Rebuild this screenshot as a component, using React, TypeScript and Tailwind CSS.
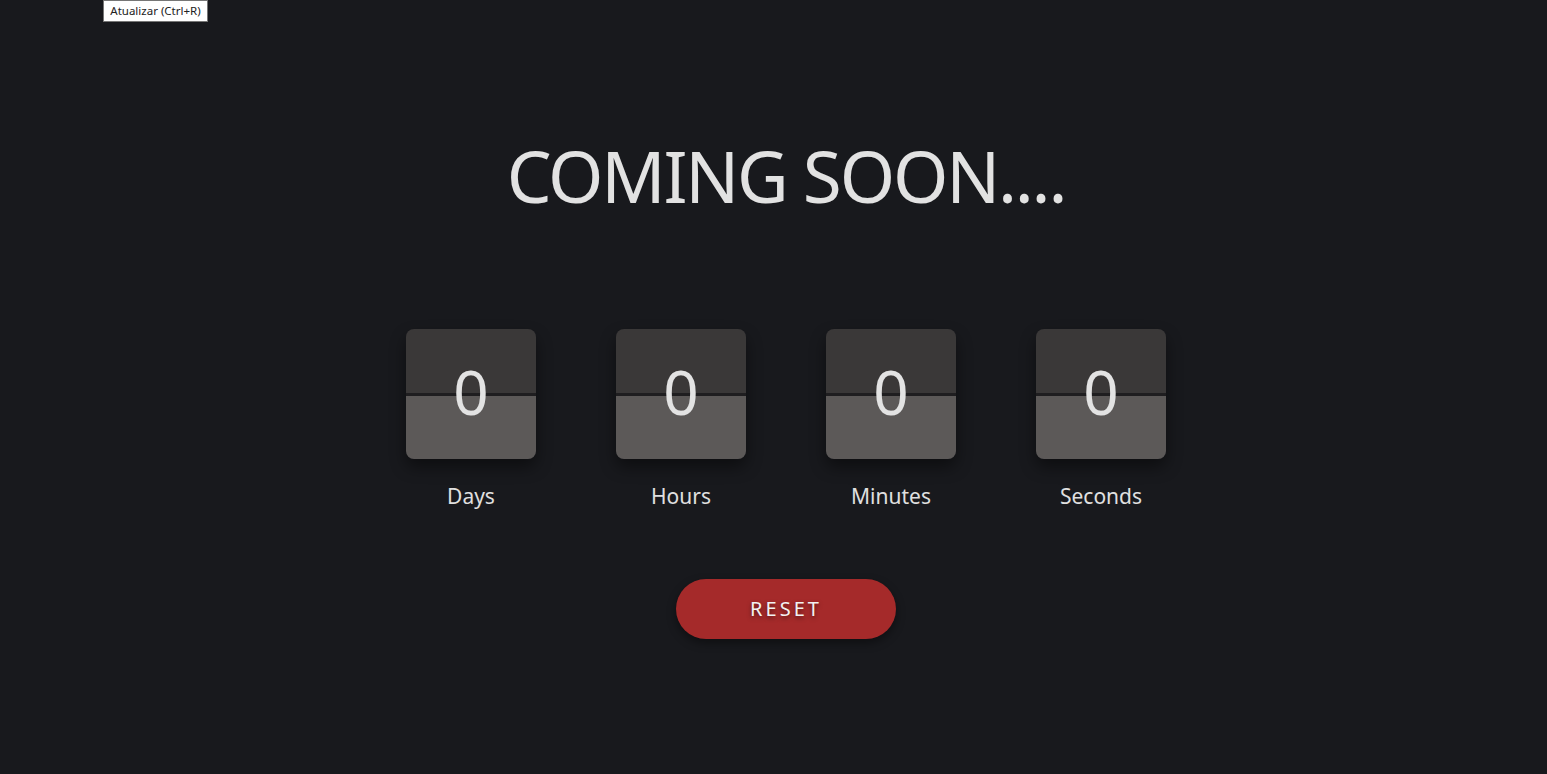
import React from 'react';

const units = ['Days', 'Hours', 'Minutes', 'Seconds'];

const FlipCard: React.FC<{ value: number; label: string }> = ({ value, label }) => (
  <div className="flex flex-col items-center">
    <div className="relative w-[130px] h-[130px] rounded-lg overflow-hidden shadow-[0_8px_16px_rgba(0,0,0,0.45)]">
      <div className="h-[64px] bg-[#3a3838]" />
      <div className="h-[3px] bg-[#1f1e20]" />
      <div className="h-[63px] bg-[#5c5958]" />
      <span className="absolute inset-0 flex items-center justify-center text-[62px] leading-none text-[#e3e3e3] pb-[6px]">
        {value}
      </span>
    </div>
    <span className="mt-[24px] text-[21px] leading-[26px] text-[#e0e0e0]">{label}</span>
  </div>
);

export default function App() {
  return (
    <div
      className="relative min-h-screen w-full bg-[#18191d] flex flex-col items-center pl-[25px]"
      style={{ fontFamily: '"Noto Sans", "Open Sans", sans-serif' }}
    >
      {/* browser tooltip */}
      <div className="absolute left-[103px] top-0 h-[22px] w-[105px] flex items-center justify-center bg-white border border-[#767676] text-[11.5px] leading-none text-[#222]">
        Atualizar (Ctrl+R)
      </div>

      <h1 className="mt-[130px] text-[71px] leading-[92px] font-normal tracking-[-2.2px] text-[#e2e2e2]">
        COMING SOON....
      </h1>

      <div className="mt-[107px] flex gap-[80px]">
        {units.map((u) => (
          <FlipCard key={u} value={0} label={u} />
        ))}
      </div>

      <button className="mt-[70px] w-[220px] h-[60px] rounded-full bg-[#a52a2a] text-[20px] tracking-[3px] text-[#f2f2f2] shadow-[0_4px_10px_rgba(0,0,0,0.4)] [text-shadow:0_2px_4px_rgba(0,0,0,0.5)]">
        RESET
      </button>
    </div>
  );
}
